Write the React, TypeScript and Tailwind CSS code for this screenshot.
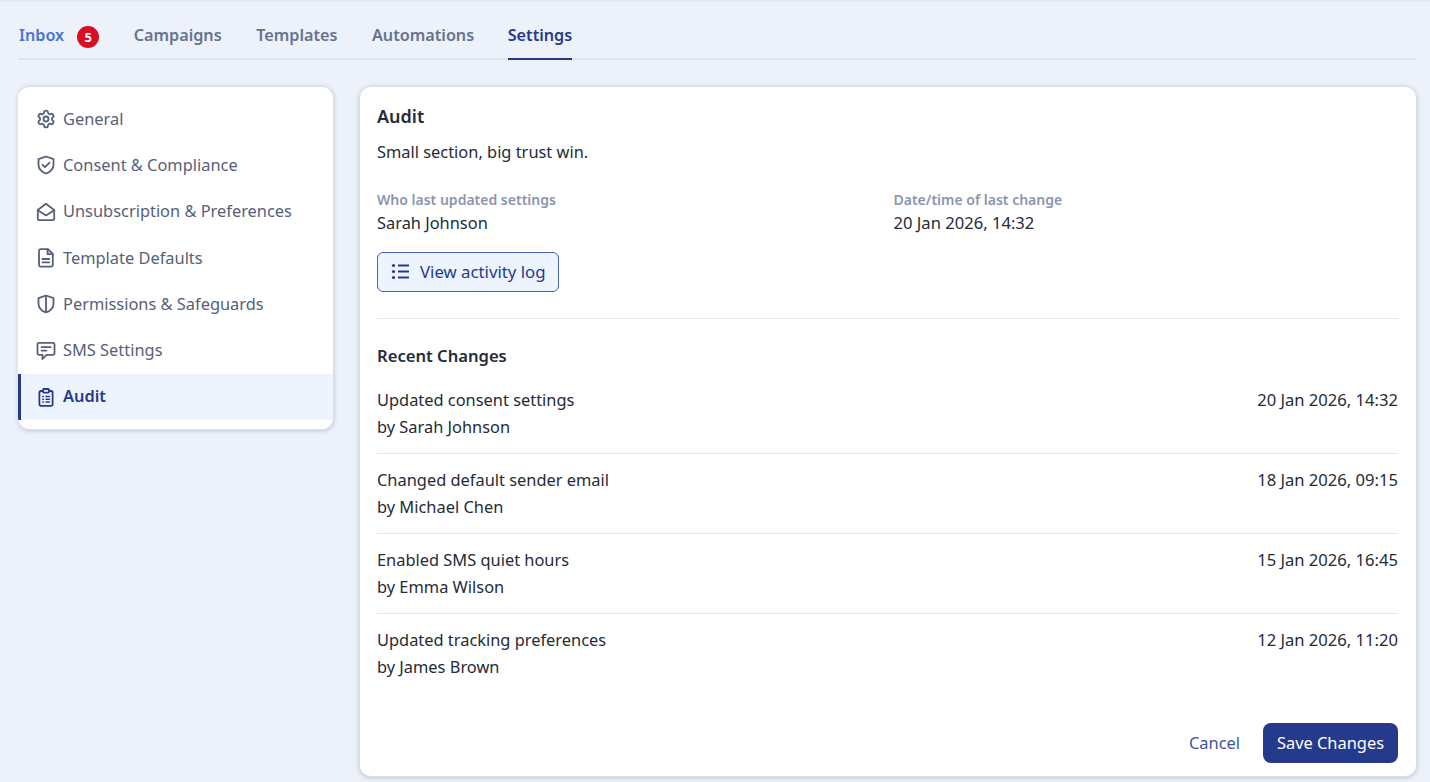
import React from "react";
import { Settings } from "lucide-react";

const tabs = ["Campaigns", "Templates", "Automations"];

const Svg = ({ children }: { children: React.ReactNode }) => (
  <svg
    width="20"
    height="20"
    viewBox="0 0 20 20"
    fill="none"
    stroke="currentColor"
    strokeWidth="1.8"
    strokeLinecap="round"
    strokeLinejoin="round"
    className="shrink-0"
  >
    {children}
  </svg>
);

const shield = "M10 1.5 17.5 4.2V9.5C17.5 14 14.2 17 10 18.5 5.8 17 2.5 14 2.5 9.5V4.2Z";

const GearIcon = () => <Settings size={20} strokeWidth={2.2} className="shrink-0" />;

const ShieldCheckIcon = () => (
  <Svg>
    <path d={shield} />
    <path d="M6.5 9.8 9 12.2 13.5 7.6" />
  </Svg>
);

const MailOpenIcon = () => (
  <Svg>
    <path d="M1.8 8 10 1.8 18.2 8V17A1.2 1.2 0 0 1 17 18.2H3A1.2 1.2 0 0 1 1.8 17Z" />
    <path d="M2.2 8.4 10 13.4 17.8 8.4" />
  </Svg>
);

const FileIcon = () => (
  <Svg>
    <path d="M4.5 1.2H12L16.8 6V17A1.6 1.6 0 0 1 15.2 18.6H4.5A1.6 1.6 0 0 1 3 17V2.8A1.6 1.6 0 0 1 4.5 1.2Z" />
    <path d="M11.6 1.5V6.2H16.5M6.5 11H13.2M6.5 14.4H13.2" />
  </Svg>
);

const ShieldSplitIcon = () => (
  <Svg>
    <path d={shield} />
    <path d="M10 2V18" />
  </Svg>
);

const MessageIcon = () => (
  <Svg>
    <path d="M3 1.8H17A1.5 1.5 0 0 1 18.5 3.3V12.3A1.5 1.5 0 0 1 17 13.8H10.5L6.5 18V13.8H3A1.5 1.5 0 0 1 1.5 12.3V3.3A1.5 1.5 0 0 1 3 1.8Z" />
    <path d="M5.5 6.2H14.5M5.5 9.6H10.5" />
  </Svg>
);

const ClipboardIcon = () => (
  <Svg>
    <path d="M6.5 4H5A1.6 1.6 0 0 0 3.4 5.6V17.2A1.6 1.6 0 0 0 5 18.8H15A1.6 1.6 0 0 0 16.6 17.2V5.6A1.6 1.6 0 0 0 15 4H13.5" />
    <rect x="7" y="2" width="6" height="3.6" rx="0.8" />
    <path d="M6.8 9.5H7.4M10 9.5H13.4M6.8 12.3H7.4M10 12.3H13.4M6.8 15.1H7.4M10 15.1H13.4" strokeWidth="1.5" />
  </Svg>
);

const menu = [
  { label: "General", icon: GearIcon },
  { label: "Consent & Compliance", icon: ShieldCheckIcon },
  { label: "Unsubscription & Preferences", icon: MailOpenIcon },
  { label: "Template Defaults", icon: FileIcon },
  { label: "Permissions & Safeguards", icon: ShieldSplitIcon },
  { label: "SMS Settings", icon: MessageIcon },
];

const changes = [
  { title: "Updated consent settings", by: "by Sarah Johnson", date: "20 Jan 2026, 14:32" },
  { title: "Changed default sender email", by: "by Michael Chen", date: "18 Jan 2026, 09:15" },
  { title: "Enabled SMS quiet hours", by: "by Emma Wilson", date: "15 Jan 2026, 16:45" },
  { title: "Updated tracking preferences", by: "by James Brown", date: "12 Jan 2026, 11:20" },
];

const App = () => {
  return (
    <div className="h-[782px] overflow-hidden bg-[#edf1f9] border-t-2 border-[#e4e8f1] pl-[18px] pr-[13px] font-['Noto_Sans',sans-serif] text-[16.4px] text-[#252b37]">
      <nav className="mr-px flex h-[58px] items-end gap-[34.5px] border-b-2 border-[#dfe4ef] pl-px text-[16.2px] font-semibold leading-[24px] text-[#64748f]">
        <div className="flex h-[35px] items-start gap-[13px] text-[#4a74d0]">
          <span>Inbox</span>
          <span className="mt-[3px] flex h-[22px] w-[22px] items-center justify-center rounded-full bg-[#d70f25] text-[13px] font-bold text-white">
            5
          </span>
        </div>
        {tabs.map((tab) => (
          <div key={tab} className="h-[35px]">
            {tab}
          </div>
        ))}
        <div className="-mb-[2px] -ml-px h-[37px] border-b-2 border-[#263a8c] text-[#263a8c]">Settings</div>
      </nav>

      <div className="mt-[26px] flex gap-[25px]">
        <aside className="h-[344px] w-[316px] shrink-0 overflow-hidden rounded-[12px] border border-l-0 border-[#d9dfea] bg-white pt-[9px] shadow-[-1px_0_0_0_#e2e7f0,0_1px_4px_rgba(100,116,139,0.35)]">
          {menu.map(({ label, icon: Icon }) => (
            <div key={label} className="flex h-[46.3px] items-center gap-[7px] pl-[18px] text-[#566078]">
              <Icon />
              <span>{label}</span>
            </div>
          ))}
          <div className="flex h-[46px] items-center gap-[7px] border-l-[3px] border-[#263a8c] bg-[#eef4fe] pl-[15px] font-semibold text-[#263a8c]">
            <ClipboardIcon />
            <span>Audit</span>
          </div>
        </aside>

        <main className="flex h-[691px] w-[1058px] shrink-0 flex-col rounded-[12px] border border-[#d9dfea] bg-white pl-[17px] pr-[18px] pt-[17px] shadow-[0_1px_4px_rgba(100,116,139,0.35)]">
          <h2 className="text-[18px] font-semibold leading-[24px]">Audit</h2>
          <p className="mt-[12px] leading-[24px]">Small section, big trust win.</p>

          <div className="mt-[26px] grid grid-cols-2 gap-x-3">
            <div>
              <div className="text-[14px] font-semibold leading-[20px] text-[#8a96ad]">Who last updated settings</div>
              <div className="leading-[26px]">Sarah Johnson</div>
            </div>
            <div>
              <div className="text-[14px] font-semibold leading-[20px] text-[#8a96ad]">Date/time of last change</div>
              <div className="text-[16.6px] leading-[26px]">20 Jan 2026, 14:32</div>
            </div>
          </div>

          <button className="mt-[16px] flex h-[40px] w-[182px] items-center gap-[9px] rounded-[6px] border border-[#4a63b8] bg-[#eef4fe] pl-[13px] text-[16.8px] text-[#263a8c]">
            <svg width="20" height="20" viewBox="0 0 20 20" fill="none" stroke="currentColor" strokeWidth="2">
              <path d="M7 3.5h11M7 9.5h11M7 15.5h11" />
              <circle cx="2.5" cy="3.5" r="1.6" fill="currentColor" stroke="none" />
              <circle cx="2.5" cy="9.5" r="1.6" fill="currentColor" stroke="none" />
              <circle cx="2.5" cy="15.5" r="1.6" fill="currentColor" stroke="none" />
            </svg>
            <span>View activity log</span>
          </button>

          <div className="mt-[26px] border-t border-[#e5e7eb]" />

          <h3 className="mt-[25px] text-[16.6px] font-semibold leading-[24px]">Recent Changes</h3>

          <div className="mt-[6px]">
            {changes.map((item, i) => (
              <div
                key={item.title}
                className={`flex h-[80px] justify-between pt-[12px] ${i < changes.length - 1 ? "border-b border-[#e5e7eb]" : ""}`}
              >
                <div className="leading-[27px]">
                  <div>{item.title}</div>
                  <div>{item.by}</div>
                </div>
                <div className="text-[16.6px] leading-[27px]">{item.date}</div>
              </div>
            ))}
          </div>

          <div className="mb-[13px] mt-auto flex items-center justify-end gap-[23px]">
            <span className="text-[#3f549f]">Cancel</span>
            <button className="h-[40px] w-[135px] rounded-[8px] bg-[#263a8c] text-white">Save Changes</button>
          </div>
        </main>
      </div>
    </div>
  );
};

export default App;
